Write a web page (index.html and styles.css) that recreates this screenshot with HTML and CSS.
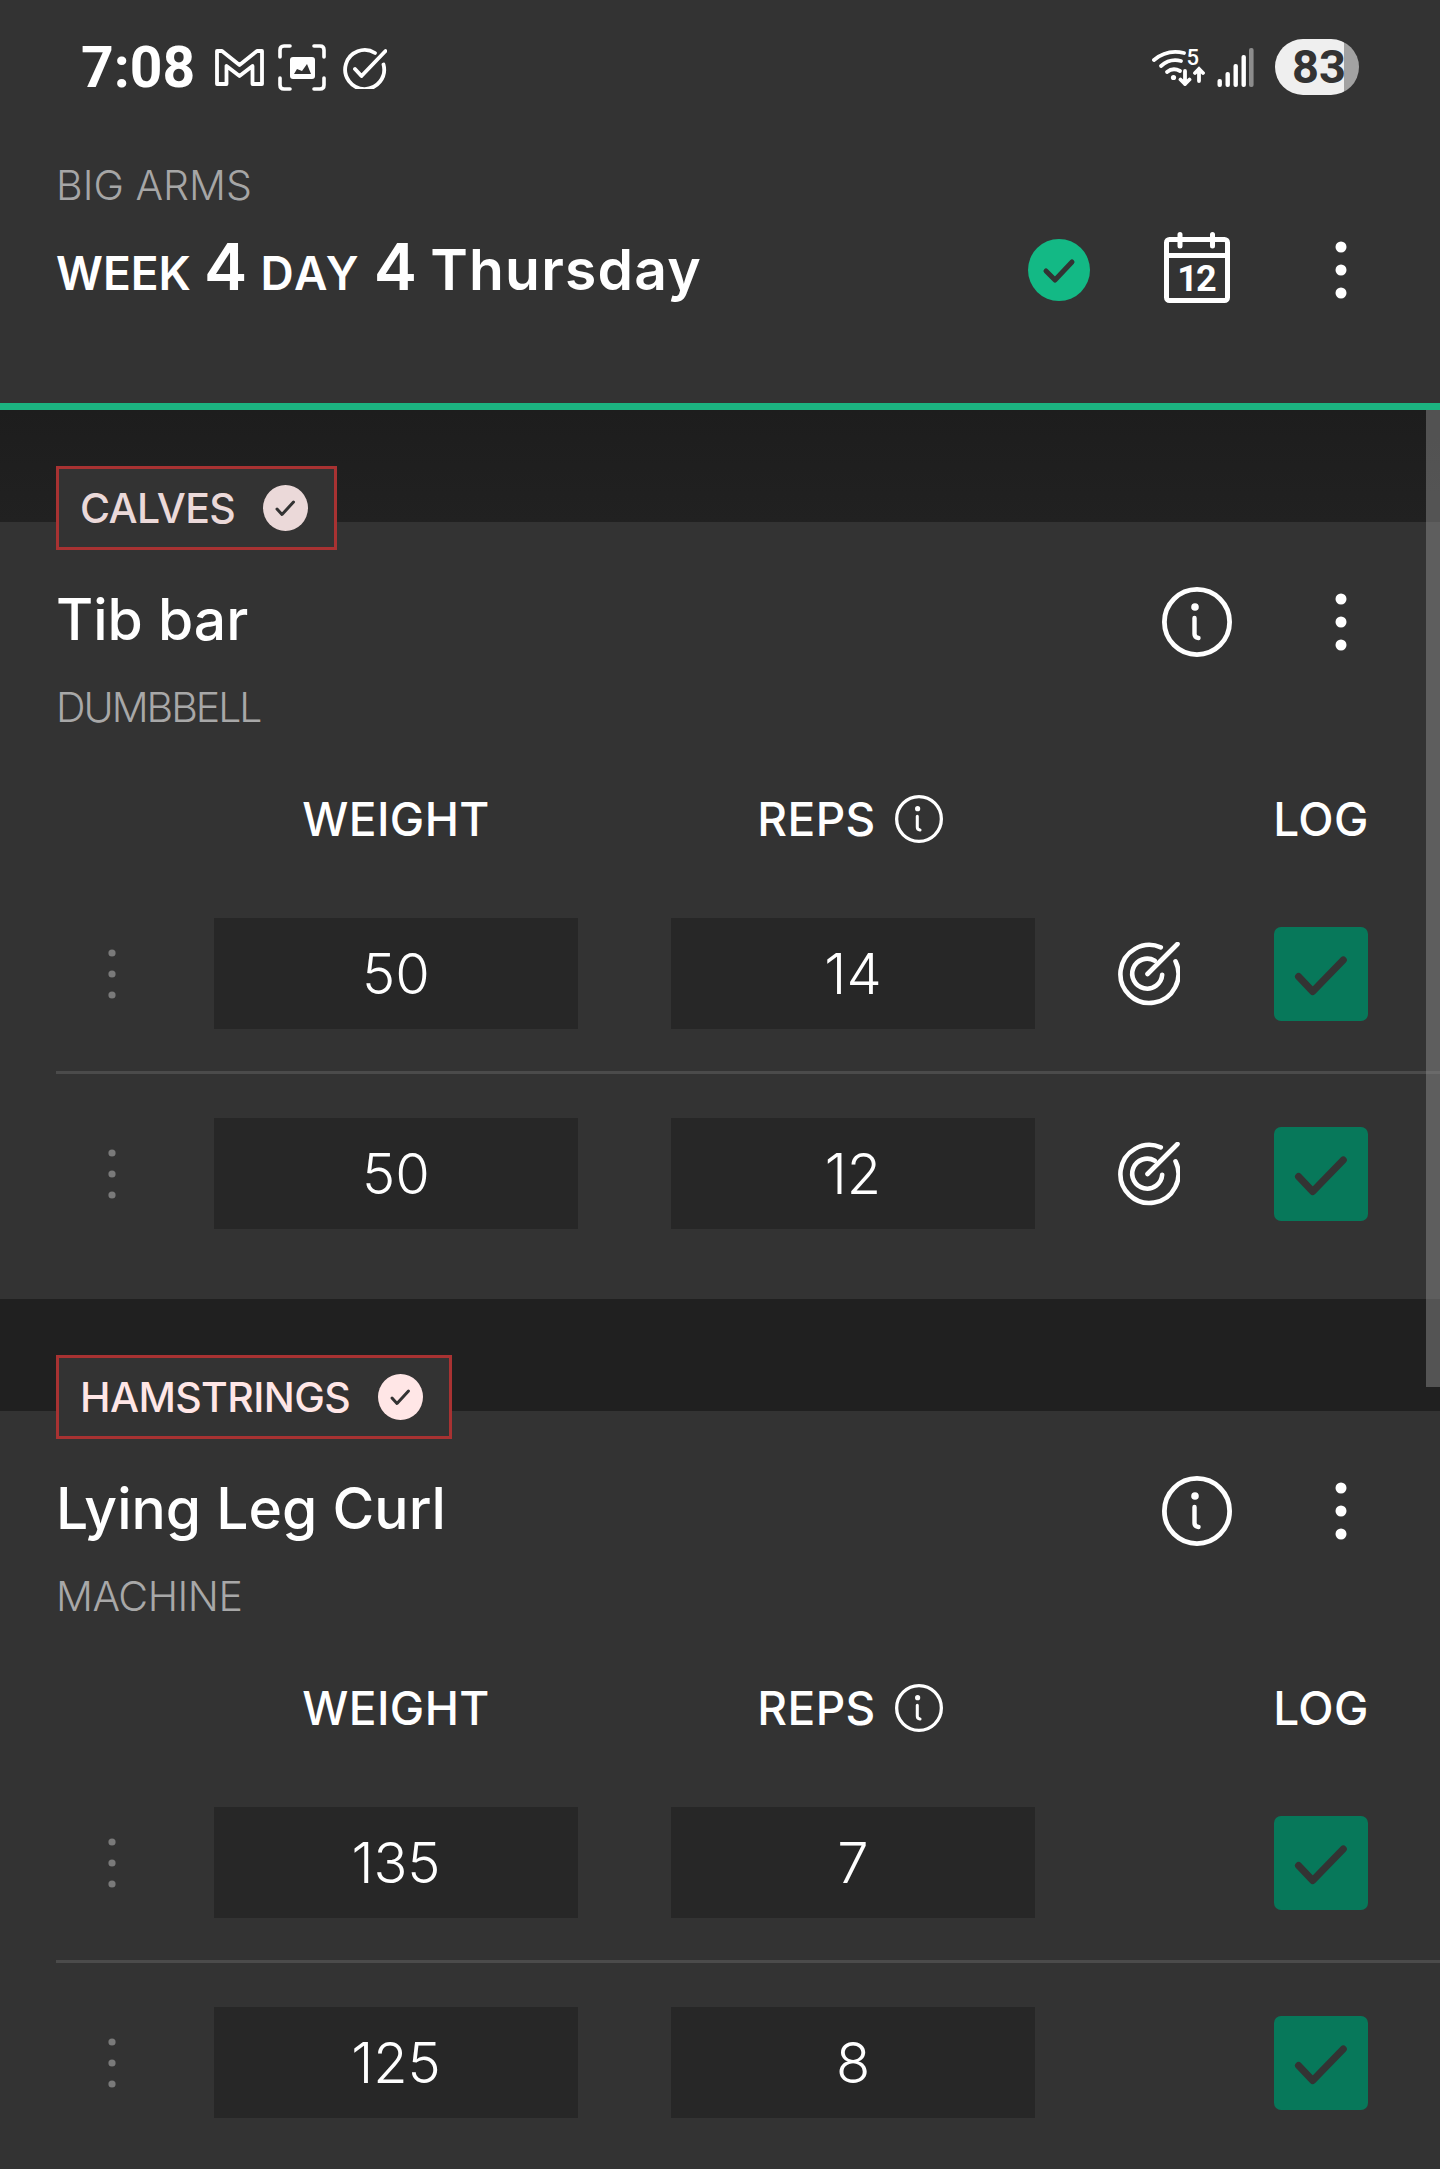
FILE: index.html
```html
<!DOCTYPE html>
<html lang="en">
  <head>
    <meta charset="UTF-8" />
    <meta name="viewport" content="width=device-width, initial-scale=1.0" />
    <title>Big Arms</title>
    <link rel="stylesheet" href="styles.css">
  </head>
  <body>
    <svg class="defs" aria-hidden="true">
      <symbol id="dots" viewBox="0 0 12 58">
        <circle cx="6" cy="6" r="5.5" fill="currentColor" />
        <circle cx="6" cy="29" r="5.5" fill="currentColor" />
        <circle cx="6" cy="52" r="5.5" fill="currentColor" />
      </symbol>
      <symbol id="grip" viewBox="0 0 8 50">
        <circle cx="4" cy="4" r="3.6" fill="currentColor" />
        <circle cx="4" cy="25" r="3.6" fill="currentColor" />
        <circle cx="4" cy="46" r="3.6" fill="currentColor" />
      </symbol>
      <symbol id="info" viewBox="0 0 70 70">
        <circle cx="35" cy="35" r="32.6" fill="none" stroke="currentColor" stroke-width="4.8" />
        <circle cx="33" cy="20" r="3.8" fill="currentColor" />
        <path d="M32.5 31 V47 Q32.5 50.5 36.5 51" fill="none" stroke="currentColor" stroke-width="4.4" stroke-linecap="round" />
      </symbol>
      <symbol id="target" viewBox="0 0 64 64">
        <g fill="none" stroke="currentColor" stroke-width="4.6" stroke-linecap="round">
          <path d="M44.8 5.3 A29 29 0 1 0 59.5 19.3" />
          <path d="M38.8 18.7 A15 15 0 1 0 46.2 32.7" />
          <path d="M31.5 32 L61.5 2" />
        </g>
      </symbol>
      <symbol id="tick" viewBox="0 0 94 94">
        <path d="M24.5 49.5 L38.7 64.5 L69.3 33" fill="none" stroke="currentColor" stroke-width="7" stroke-linecap="round" stroke-linejoin="round" />
      </symbol>
      <symbol id="tagcheck" viewBox="0 0 45 46">
        <ellipse cx="22.5" cy="23" rx="22.5" ry="23" fill="currentColor" />
        <path d="M14 24 L19 29.5 L30.5 17" fill="none" stroke="#333" stroke-width="3" stroke-linecap="round" stroke-linejoin="round" />
      </symbol>
    </svg>

    <main class="page">
      <header class="top">
        <div class="statusbar">
          <span class="clock">7:08</span>
          <svg class="st-mail" width="49" height="38" viewBox="0 0 49 38">
            <path d="M2 36 V3 H7 L24.5 17 L42 3 H47 V36 H37.5 V18 L24.5 28 L11.5 18 V36 Z" fill="none" stroke="#fff" stroke-width="3.8" stroke-linejoin="round" />
          </svg>
          <svg class="st-scan" width="48" height="47" viewBox="0 0 48 47">
            <g fill="none" stroke="#fff" stroke-width="3.6" stroke-linecap="round">
              <path d="M2 13 V6 Q2 2 6 2 H12" />
              <path d="M36 2 H42 Q46 2 46 6 V13" />
              <path d="M2 34 V41 Q2 45 6 45 H12" />
              <path d="M36 45 H42 Q46 45 46 41 V34" />
            </g>
            <rect x="12" y="13" width="25" height="22" rx="3" fill="#fff" />
            <path d="M16 30 L19 25 L24 27 L29 20 L33 30 Z" fill="#333" />
          </svg>
          <svg class="st-check" width="44" height="43" viewBox="0 0 44 43">
            <path d="M32 7 A19.5 19.5 0 1 0 40.5 18.5" fill="none" stroke="#fff" stroke-width="3.8" stroke-linecap="round" />
            <path d="M12 23 L18.5 30 L42.5 5" fill="none" stroke="#fff" stroke-width="3.8" stroke-linecap="round" stroke-linejoin="round" />
          </svg>
          <svg class="st-wifi" width="53" height="44" viewBox="0 -6 53 44">
            <g fill="none" stroke="#fff" stroke-width="3.8" stroke-linecap="round">
              <path d="M2 12 Q15 1 32 5" />
              <path d="M9 18 Q18 10 29 13" />
              <path d="M15 24 Q21 19 28 23" />
              <path d="M33 23 V36 M28.5 31.5 L33 36 L37.5 31.5" />
              <path d="M47 33 V21 M43 25 L47 21 L51 25" />
            </g>
            <circle cx="21.5" cy="29.5" r="2.6" fill="#fff" />
            <text class="st-five" x="34.5" y="17">5</text>
          </svg>
          <svg class="st-signal" width="37" height="40" viewBox="0 0 37 40">
            <rect x="0.5" y="32" width="4.4" height="8" rx="2" fill="#fff" />
            <rect x="8.5" y="25" width="4.4" height="15" rx="2" fill="#fff" />
            <rect x="16.5" y="17" width="4.4" height="23" rx="2" fill="#fff" />
            <rect x="24.5" y="8" width="4.4" height="32" rx="2" fill="#fff" />
            <rect x="32" y="1" width="4.6" height="39" rx="2" fill="#8c8c8c" />
          </svg>
          <span class="battery">83</span>
        </div>
        <p class="plan">BIG ARMS</p>
        <div class="dayrow">
          <h1 class="dayname"><span class="small week">WEEK</span> <span class="big">4</span> <span class="small day">DAY</span> <span class="big">4</span> <span class="dayword">Thursday</span></h1>
          <svg class="done" width="62" height="62" viewBox="0 0 62 62">
            <circle cx="31" cy="31" r="31" fill="#13b985" />
            <path d="M18 32 L27 41 L44 23" fill="none" stroke="#333" stroke-width="5" stroke-linecap="round" stroke-linejoin="round" />
          </svg>
          <svg class="calendar" width="66" height="71" viewBox="0 0 66 71">
            <rect x="2.5" y="7.5" width="61" height="61" rx="3" fill="none" stroke="#fff" stroke-width="5" />
            <path d="M2.5 23.5 H63.5" stroke="#fff" stroke-width="5" />
            <path d="M16 2.5 V14 M48.5 2.5 V14" stroke="#fff" stroke-width="5" stroke-linecap="round" />
            <text class="calendar-num" x="32" y="59">12</text>
          </svg>
          <svg class="dots"><use href="#dots" /></svg>
        </div>
      </header>

      <section class="group">
        <div class="band"></div>
        <div class="tag tag-dim">
          <span>CALVES</span>
          <svg class="tagcheck"><use href="#tagcheck" /></svg>
        </div>
        <div class="card">
          <div class="exrow">
            <h2>Tib bar</h2>
            <svg class="info"><use href="#info" /></svg>
            <svg class="dots"><use href="#dots" /></svg>
          </div>
          <p class="kind kind-tight">DUMBBELL</p>
          <div class="grid heads">
            <span></span>
            <span class="head">WEIGHT</span>
            <span class="head head-reps">REPS <svg class="info-small"><use href="#info" /></svg></span>
            <span></span>
            <span class="head head-log">LOG</span>
          </div>
          <div class="grid setrow first">
            <svg class="drag"><use href="#grip" /></svg>
            <div class="val">50</div>
            <div class="val">14</div>
            <svg class="target"><use href="#target" /></svg>
            <div class="log"><svg><use href="#tick" /></svg></div>
          </div>
          <div class="rule"></div>
          <div class="grid setrow">
            <svg class="drag"><use href="#grip" /></svg>
            <div class="val">50</div>
            <div class="val">12</div>
            <svg class="target"><use href="#target" /></svg>
            <div class="log"><svg><use href="#tick" /></svg></div>
          </div>
        </div>
      </section>

      <section class="group">
        <div class="band band-second"></div>
        <div class="tag">
          <span>HAMSTRINGS</span>
          <svg class="tagcheck"><use href="#tagcheck" /></svg>
        </div>
        <div class="card">
          <div class="exrow">
            <h2>Lying Leg Curl</h2>
            <svg class="info"><use href="#info" /></svg>
            <svg class="dots"><use href="#dots" /></svg>
          </div>
          <p class="kind">MACHINE</p>
          <div class="grid heads">
            <span></span>
            <span class="head">WEIGHT</span>
            <span class="head head-reps">REPS <svg class="info-small"><use href="#info" /></svg></span>
            <span></span>
            <span class="head head-log">LOG</span>
          </div>
          <div class="grid setrow first">
            <svg class="drag"><use href="#grip" /></svg>
            <div class="val">135</div>
            <div class="val">7</div>
            <span></span>
            <div class="log"><svg><use href="#tick" /></svg></div>
          </div>
          <div class="rule"></div>
          <div class="grid setrow">
            <svg class="drag"><use href="#grip" /></svg>
            <div class="val">125</div>
            <div class="val">8</div>
            <span></span>
            <div class="log"><svg><use href="#tick" /></svg></div>
          </div>
        </div>
      </section>

      <div class="scrollthumb"></div>
    </main>
  </body>
</html>
```

FILE: styles.css
```css
* {
  box-sizing: border-box;
}
html,
body {
  margin: 0;
  background-color: #333;
}
body {
  font-family: Inter, "Liberation Sans", sans-serif;
  color: #fff;
}
.defs {
  position: absolute;
  width: 0;
  height: 0;
}
.page {
  position: relative;
  height: 2169px;
  overflow: hidden;
}

/* status bar */
.top {
  height: 410px;
  border-bottom: 7px solid #1cb481;
}
.statusbar {
  display: flex;
  align-items: center;
  height: 134px;
  padding: 0 81px 0 81px;
}
.clock {
  width: 134px;
  font-family: Roboto, sans-serif;
  font-size: 57px;
  font-weight: 700;
}
.st-scan {
  margin-left: 14px;
}
.st-check {
  margin-left: 17px;
}
.st-wifi {
  margin-left: auto;
  margin-top: -6px;
}
.st-five {
  font-family: Roboto, sans-serif;
  font-size: 22px;
  font-weight: 500;
  fill: #fff;
}
.st-signal {
  margin-left: 12px;
}
.battery {
  width: 84px;
  height: 56px;
  margin-left: 21px;
  padding-left: 17px;
  border-radius: 28px;
  background: linear-gradient(90deg, #efefef 82%, #a2a2a2 82%);
  color: #333;
  font-family: Roboto, sans-serif;
  font-size: 47px;
  font-weight: 700;
  line-height: 56px;
}

/* workout title */
.plan {
  margin: 21px 0 0;
  padding-left: 56px;
  color: #a6a6a6;
  font-size: 41px;
  font-weight: 300;
  line-height: 60px;
}
.dayrow,
.exrow {
  display: flex;
  align-items: center;
  padding: 0 93px 0 56px;
}
.dayrow {
  height: 80px;
  margin-top: 15px;
}
.dayname {
  margin: 0 auto 0 0;
  font-size: 56px;
  font-weight: 600;
  line-height: 80px;
  word-spacing: -1px;
  white-space: nowrap;
}
.dayname .small {
  font-size: 46px;
}
.dayname .day {
  letter-spacing: 2px;
}
.dayname .big {
  font-size: 65px;
}
.dayname .dayword {
  font-size: 57px;
  letter-spacing: 1.2px;
}
.calendar {
  margin: 0 0 5px 74px;
}
.calendar-num {
  fill: #fff;
  font-family: Roboto, sans-serif;
  font-size: 36px;
  font-weight: 700;
  letter-spacing: -2px;
  text-anchor: middle;
}
.dots {
  width: 12px;
  height: 58px;
  color: #fff;
}
.calendar + .dots {
  margin-left: 105px;
}

/* exercise group */
.band {
  height: 112px;
  background: linear-gradient(#1d1d1d, #212121);
}
.band-second {
  background: #202020;
}
.tag {
  position: relative;
  display: flex;
  align-items: center;
  gap: 28px;
  width: fit-content;
  height: 84px;
  margin: -56px 0 0 56px;
  padding: 0 26px 0 21px;
  border: 3px solid #a83232;
  background-color: #333;
  color: #ffe6e6;
  font-size: 41px;
  font-weight: 500;
  letter-spacing: -0.6px;
}
.tag-dim {
  color: #ebd9d9;
}
.tagcheck {
  width: 45px;
  height: 46px;
}
.card {
  padding-bottom: 70px;
}
.exrow {
  height: 72px;
  margin-top: 36px;
}
.exrow h2 {
  margin: 0 auto 5px 0;
  font-size: 57px;
  font-weight: 500;
  line-height: 72px;
}
.info {
  width: 70px;
  height: 70px;
  margin-right: 103px;
}
.kind {
  margin: 24px 0 0;
  padding-left: 56px;
  color: #a8a8a8;
  font-size: 41px;
  font-weight: 300;
  letter-spacing: -0.5px;
  line-height: 50px;
}
.kind-tight {
  letter-spacing: -2px;
}

/* sets table */
.grid {
  display: grid;
  grid-template-columns: 158px 457px 447px 156px 94px;
  align-items: center;
  padding-left: 56px;
}
.heads {
  height: 60px;
  margin-top: 57px;
}
.head {
  display: flex;
  align-items: center;
  justify-content: center;
  gap: 19px;
  width: 364px;
  font-size: 46px;
  font-weight: 500;
  letter-spacing: 0.4px;
}
.head-reps {
  width: 358px;
}
.head-log {
  width: 94px;
}
.info-small {
  width: 48px;
  height: 48px;
}
.setrow {
  height: 111px;
}
.first {
  margin-top: 69px;
}
.rule {
  height: 3px;
  margin: 42px 0 44px 56px;
  background-color: #4b4b4b;
}
.drag {
  width: 8px;
  height: 50px;
  margin-left: 52px;
  color: #7a7a7a;
}
.val {
  display: flex;
  align-items: center;
  justify-content: center;
  width: 364px;
  height: 111px;
  background-color: #272727;
  font-size: 56px;
  font-weight: 300;
}
.target {
  width: 64px;
  height: 64px;
  margin-left: -2px;
  color: #fff;
}
.log {
  width: 94px;
  height: 94px;
  border-radius: 7px;
  background-color: #07785a;
  color: #333;
}
.log svg {
  display: block;
  width: 94px;
  height: 94px;
}

/* scrollbar lies over the list */
.scrollthumb {
  position: absolute;
  top: 410px;
  right: 0;
  width: 14px;
  height: 977px;
  background-color: rgba(142, 142, 142, 0.47);
}
```
